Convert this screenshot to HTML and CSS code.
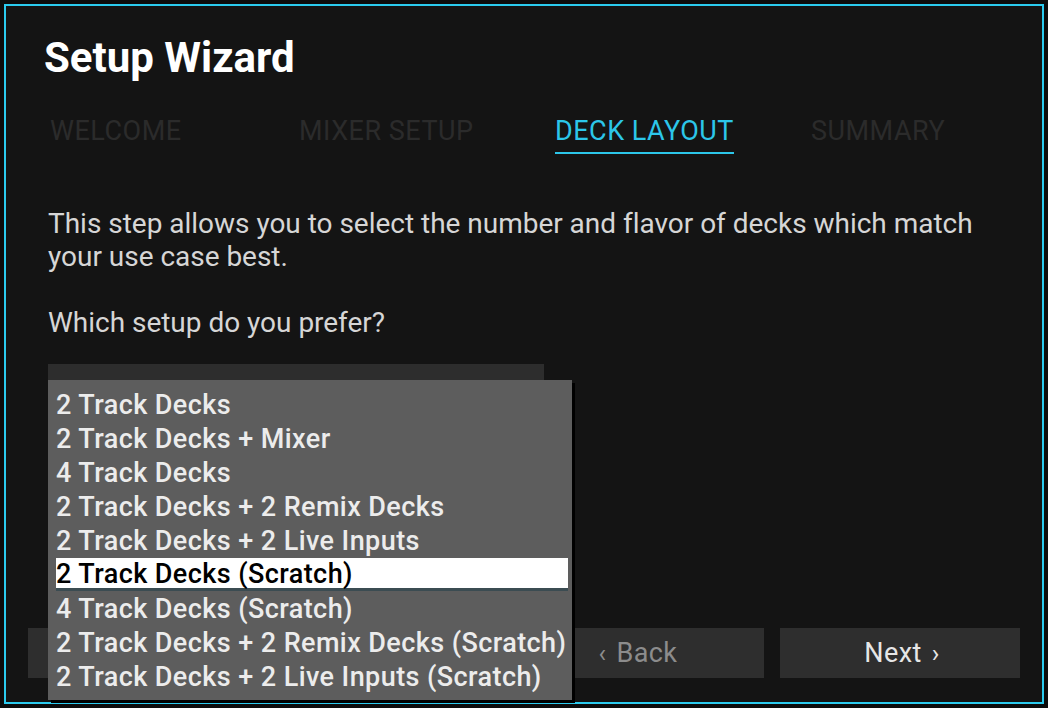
FILE: index.html
```html
<!DOCTYPE html>
<html lang="en">
<head>
<meta charset="utf-8">
<title>Setup Wizard</title>
<link rel="stylesheet" href="styles.css">
</head>
<body>
<div class="dialog">
  <div class="content">
    <h1 class="title">Setup Wizard</h1>
    <div class="tabs">
      <div class="tab"><span>WELCOME</span></div>
      <div class="tab"><span>MIXER SETUP</span></div>
      <div class="tab active"><span>DECK LAYOUT</span></div>
      <div class="tab"><span>SUMMARY</span></div>
    </div>
    <p class="text">This step allows you to select the number and flavor of decks which match<br>your use case best.</p>
    <p class="text question">Which setup do you prefer?</p>
    <div class="combo">
      <ul class="popup">
        <li class="opt">2 Track Decks</li>
        <li class="opt">2 Track Decks + Mixer</li>
        <li class="opt">4 Track Decks</li>
        <li class="opt">2 Track Decks + 2 Remix Decks</li>
        <li class="opt">2 Track Decks + 2 Live Inputs</li>
        <li class="opt sel">2 Track Decks (Scratch)</li>
        <li class="opt">4 Track Decks (Scratch)</li>
        <li class="opt">2 Track Decks + 2 Remix Decks (Scratch)</li>
        <li class="opt">2 Track Decks + 2 Live Inputs (Scratch)</li>
      </ul>
    </div>
  </div>
  <div class="footer">
    <button class="btn cancel" aria-label="Cancel"></button>
    <div class="nav">
      <button class="btn back"><span class="chev">‹</span>Back</button>
      <button class="btn next">Next<span class="chev after">›</span></button>
    </div>
  </div>
</div>
</body>
</html>
```
FILE: styles.css
```css
* { box-sizing: border-box; }
html, body { margin: 0; padding: 0; }
body {
  background: #0c0c0c;
  width: 1048px;
  height: 708px;
  overflow: hidden;
  padding: 4px;
  font-family: Roboto, "Liberation Sans", sans-serif;
}
.dialog {
  width: 1040px;
  height: 700px;
  border: 2px solid #2bcbef;
  background: #141414;
  display: flex;
  flex-direction: column;
}
.content {
  padding: 27px 0 0 42px;
}
.title {
  margin: 0 0 0 -4px;
  font-size: 42px;
  line-height: 50px;
  font-weight: 700;
  color: #ffffff;
}
.tabs {
  margin-top: 31px;
  padding-left: 2px;
  display: grid;
  grid-template-columns: 249px 256px 256px auto;
}
.tab span {
  display: inline-block;
  font-size: 27px;
  line-height: 34px;
  letter-spacing: 0.5px;
  padding-bottom: 4px;
  border-bottom: 2px solid transparent;
  color: #2b2b2b;
}
.tab.active span {
  color: #2cc6e9;
  border-bottom-color: #2cc6e9;
}
.text {
  margin: 53px 0 0 0;
  font-size: 28px;
  line-height: 33px;
  letter-spacing: -0.02px;
  color: #d6d6d6;
}
.text.question {
  margin-top: 33px;
}
.combo {
  position: relative;
  margin-top: 25px;
  width: 496px;
  height: 40px;
  background: #2d2d2d;
}
.popup {
  position: absolute;
  top: 16px;
  left: 0;
  width: 524px;
  height: 320px;
  margin: 0;
  padding: 8px 4px 0 8px;
  list-style: none;
  background: #5d5d5d;
  box-shadow: 3px 3px 0 #000;
  z-index: 2;
}
.opt {
  height: 34px;
  font-size: 27px;
  line-height: 34px;
  font-weight: 500;
  letter-spacing: 0.42px;
  color: #ececec;
  white-space: nowrap;
}
.opt.sel {
  color: #000;
  background: linear-gradient(#ffffff 0 30px, #3b4c52 30px 33px, transparent 33px);
  line-height: 32px;
}
.footer {
  margin-top: auto;
  padding: 0 22px 24px 22px;
  display: flex;
  justify-content: space-between;
}
.nav {
  display: flex;
  gap: 16px;
}
.btn {
  width: 240px;
  height: 50px;
  border: 0;
  background: #2e2e2e;
  font-family: Roboto, "Liberation Sans", sans-serif;
  font-size: 27px;
  letter-spacing: 0.4px;
  color: #e6e6e6;
  padding: 0;
}
.btn.back { color: #8c8c8c; padding-right: 12px; }
.btn.next { padding-left: 4px; }
.chev { font-size: 25px; margin-right: 10px; }
.chev.after { margin: 0 0 0 10px; }
```
